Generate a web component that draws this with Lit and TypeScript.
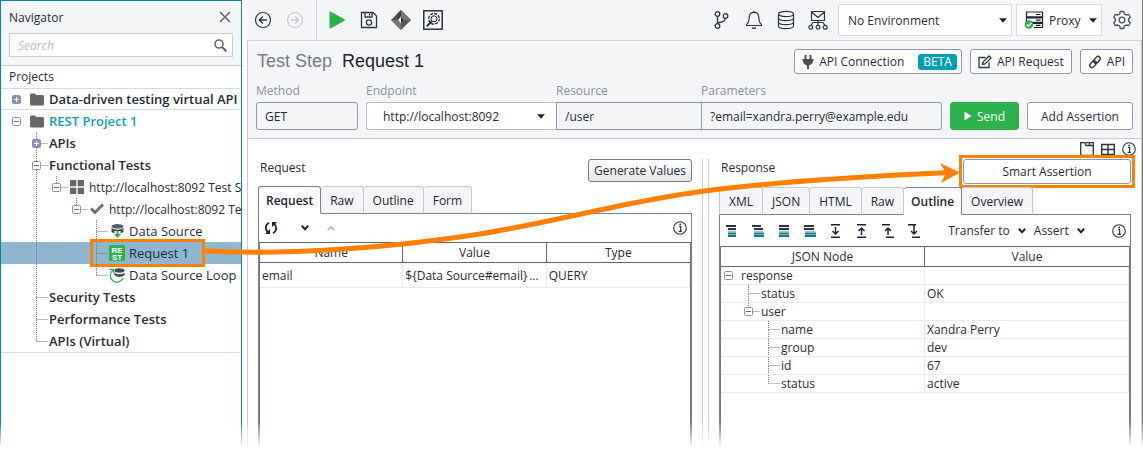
import { LitElement, html, css, svg, nothing } from "lit";
import { customElement, property } from "lit/decorators.js";

const dark = "#2b3442";

/* Icons: [width, height, drawing] */
const icons: Record<string, [number, number, unknown]> = {
  close: [12, 12, svg`<path d="M1 1l10 10M11 1L1 11" stroke="#666" stroke-width="1.6"/>`],
  search: [13, 13, svg`<circle cx="5" cy="5" r="4" fill="none" stroke="#666" stroke-width="1.6"/><path d="M8 8l4.400 4.400" stroke="#666" stroke-width="2"/>`],
  folder: [14, 13, svg`<path d="M0 2Q0 .5 1.500 .5H5L6.500 2H12.500Q14 2 14 3.500V11Q14 12.500 12.500 12.500H1.500Q0 12.500 0 11Z" fill="#666"/>`],
  suite: [14, 14, svg`<path d="M0 0h6.300v6.300H0zM7.700 0H14v6.300H7.700zM0 7.700h6.300V14H0zM7.700 7.700H14V14H7.700z" fill="#666"/>`],
  check: [14, 12, svg`<path d="M1 5.500L5 9.500L13 1.500" fill="none" stroke="#6a7280" stroke-width="3"/>`],
  source: [13, 14, svg`<ellipse cx="6.500" cy="2.300" rx="6" ry="2.300" fill="#555e6b"/><path d="M.5 4Q6.500 7.500 12.500 4V8Q11 9 9.500 9.200V7H3.500V9.200Q2 9 .5 8Z" fill="#434b57"/><path d="M5.500 7h2v3h2.500L6.500 14L3 10H5.500Z" fill="#2db14a"/>`],
  rest: [16, 16, svg`<rect width="16" height="16" rx="1" fill="#2db14a"/><text x="8" y="7.500" class="glyph">RE</text><text x="8" y="14.500" class="glyph">ST</text>`],
  loop: [16, 16, svg`<ellipse cx="10.500" cy="3.500" rx="5" ry="2.200" fill="#434b57"/><path d="M5.500 5.800Q10.500 8.800 15.500 5.800V8.300Q10.500 11.500 5.500 8.300Z" fill="#434b57"/><path d="M4 3.200A6.600 6.600 0 1 0 14 11" fill="none" stroke="#2db14a" stroke-width="1.400"/><path d="M.5 2.500H4.800V6.500" fill="none" stroke="#2db14a" stroke-width="1.400"/>`],
  back: [18, 18, svg`<circle cx="9" cy="9" r="7.500" fill="none" stroke="${dark}" stroke-width="1.200"/><path d="M13 9H5.500M8.800 5.500L5.300 9L8.800 12.500" fill="none" stroke="${dark}" stroke-width="1.300"/>`],
  forward: [18, 18, svg`<circle cx="9" cy="9" r="7.500" fill="none" stroke="#c3c9d6" stroke-width="1.200"/><path d="M5 9H12.500M9.200 5.500L12.700 9L9.200 12.500" fill="none" stroke="#c3c9d6" stroke-width="1.300"/>`],
  play: [18, 18, svg`<path d="M1.500 .8Q1.500 0 2.500 .4L16.500 8.300Q17.500 9 16.500 9.700L2.500 17.600Q1.500 18 1.500 17.200Z" fill="#2db14a"/>`],
  save: [18, 18, svg`<g fill="none" stroke="${dark}" stroke-width="1.300"><path d="M1.500 1.500H13L16.500 5V16.500H1.500Z"/><path d="M5 1.500V6H12V1.500M9.500 2.500V4.500"/><circle cx="9" cy="11.500" r="2.600"/></g>`],
  diamond: [20, 20, svg`<path d="M10 0L20 10L10 20L0 10Z" fill="#555"/><path d="M10 0L10 7L13 10H20Z" fill="#777"/><path d="M10 20V13L7 10H0Z" fill="#777"/><path d="M10 0V7L7 10L5 5Z" fill="#444"/><path d="M10 6.500L12.800 10L10 13.500L7.200 10Z" fill="#f4f5f7"/><path d="M10 6.500L12.800 10L10 13.500Z" fill="#222"/>`],
  inspect: [20, 20, svg`<g fill="none" stroke="#1d2430"><rect x=".8" y=".8" width="18.400" height="18.400" stroke-width="1.400"/><circle cx="11" cy="8.800" r="3" stroke-width="1"/><circle cx="11" cy="8.800" r="5.300" stroke-width="1.300" stroke-dasharray="2.800 1.300"/><path d="M8.500 11.500L3.800 16.300" stroke-width="1.800"/></g>`],
  branch: [18, 20, svg`<g fill="none" stroke="${dark}" stroke-width="1.300"><circle cx="4.500" cy="4" r="2.300"/><circle cx="12.500" cy="6" r="2.300"/><circle cx="4.500" cy="16" r="2.300"/><path d="M4.500 6.300V13.700M12.300 8.300Q12 11.500 8.500 12Q5 12.300 4.500 13.500"/></g>`],
  bell: [18, 20, svg`<g fill="none" stroke="${dark}" stroke-width="1.200"><path d="M9 2.200Q13.600 2.500 13.800 7.500Q14 12.500 16.500 14.500V15.500H1.500V14.500Q4 12.500 4.200 7.500Q4.400 2.500 9 2.200ZM9 1V2.500"/><path d="M7.200 17.500Q9 19.500 10.800 17.500"/></g>`],
  database: [18, 20, svg`<g fill="none" stroke="${dark}" stroke-width="1.200"><ellipse cx="9" cy="4" rx="7.500" ry="2.700"/><path d="M1.500 4V16C1.500 19.600 16.500 19.600 16.500 16V4M1.500 8C1.500 11.600 16.500 11.600 16.500 8M1.500 12C1.500 15.600 16.500 15.600 16.500 12"/></g>`],
  mail: [20, 20, svg`<g fill="none" stroke="${dark}" stroke-width="1.200"><path d="M3.500 1.500H16.500V10.500H3.500ZM3.500 2L10 7.500L16.500 2M10 10.500V15.500M10 12.500H5L3 15.500M10 12.500H15L17 15.500"/><circle cx="2.800" cy="17.300" r="1.900"/><circle cx="10" cy="17.300" r="1.900"/><circle cx="17.200" cy="17.300" r="1.900"/></g>`],
  server: [20, 18, svg`<g fill="none" stroke="#1d2430" stroke-width="1.200"><path d="M2.500 1H18.500V5.800H2.500ZM2.500 6.800H18.500V11.400H2.500ZM10 16.500H18.500V12.400H2.500M12 3.500H16.500M12 9.200H16.500M12 14.400H16.500"/></g><circle cx="5" cy="13.500" r="4.300" fill="#2db14a"/><path d="M2.800 13.500L4.500 15.200L7.400 12" fill="none" stroke="#fff" stroke-width="1.200"/>`],
  gear: [20, 20, svg`<g fill="none" stroke="#4a5260" stroke-width="1.300"><path d="M8.300 1.500H11.700L12.300 3.900L14.300 5L16.700 4.400L18.300 7.200L16.600 9V11L18.300 12.800L16.700 15.600L14.300 15L12.300 16.100L11.700 18.500H8.300L7.700 16.100L5.700 15L3.300 15.600L1.700 12.800L3.400 11V9L1.700 7.200L3.300 4.400L5.700 5L7.700 3.900Z" stroke-linejoin="round"/><circle cx="10" cy="10" r="2.800"/></g>`],
  plug: [12, 14, svg`<path d="M2.500 0H4.500V4H7.500V0H9.500V4H11.500V6H11Q10.800 9.500 7 10.300V14H5V10.300Q1.200 9.500 1 6H.5V4H2.500Z" fill="#4a4f58"/>`],
  edit: [14, 14, svg`<g fill="none" stroke="${dark}" stroke-width="1.300"><path d="M7.500 2.500H1V12.500H11V7.500"/><path d="M4.500 9.500L5 7L11 1L13 3L7 9Z"/></g>`],
  link: [14, 14, svg`<g fill="none" stroke="${dark}" stroke-width="1.400"><rect x="-3.800" y="-2.200" width="7.600" height="4.400" rx="2.200" transform="translate(9 4.800) rotate(-48)"/><rect x="-3.800" y="-2.200" width="7.600" height="4.400" rx="2.200" transform="translate(5 9.200) rotate(-48)"/></g>`],
  send: [8, 10, svg`<path d="M.5 .5L7.500 5L.5 9.500Z" fill="#fff"/>`],
  drop: [8, 5, svg`<path d="M0 .3H8L4 4.700Z" fill="#1d2430"/>`],
  window: [14, 14, svg`<path d="M.7 14V.7H5L6 3.500H13.300V14M6 .7H13.300V3.500M9.500 .7V3.500M.7 13.300H13.300" fill="none" stroke="${dark}" stroke-width="1.300"/>`],
  grid: [14, 13, svg`<path d="M.7 1.500H13.300V11.500H.7ZM7 1.500V11.500M.7 6.500H13.300" fill="none" stroke="${dark}" stroke-width="1.400"/>`],
  info: [14, 14, svg`<circle cx="7" cy="7" r="6.300" fill="none" stroke="${dark}" stroke-width="1.100"/><path d="M6 5.500H7.600V10M5.600 10.300H9" fill="none" stroke="${dark}" stroke-width="1.200"/><circle cx="7.200" cy="3.500" r=".9" fill="${dark}"/>`],
  refresh: [14, 14, svg`<g fill="none" stroke="#1d2430" stroke-width="1.800"><path d="M5 1.800Q1.200 4 2 8Q2.300 9.800 4.500 11.800M9 12.200Q12.800 10 12 6Q11.700 4.200 9.500 2.200"/></g><path d="M1 13H6V8ZM13 1H8V6Z" fill="#1d2430"/>`],
  down: [8, 6, svg`<path d="M.8 .8L4 4.200L7.200 .8" fill="none" stroke="#1d2430" stroke-width="2"/>`],
  up: [8, 6, svg`<path d="M.8 5.200L4 1.800L7.200 5.200" fill="none" stroke="#b3bac9" stroke-width="1.800"/>`],
  bars1: [12, 12, svg`<path d="M0 1H10M2 4H10" stroke="${dark}" stroke-width="2"/><path d="M2 6.300H10" stroke="#a0a8b5"/><path d="M2 8.500H10M2 11H10" stroke="#00798a" stroke-width="2"/>`],
  bars2: [12, 12, svg`<path d="M0 1H9M2 4H11" stroke="${dark}" stroke-width="2"/><path d="M2 6.300H11" stroke="#a0a8b5"/><path d="M2 8.500H12M2 11H12" stroke="#00798a" stroke-width="2"/>`],
  bars3: [12, 12, svg`<path d="M1 1H11M1 4H11" stroke="${dark}" stroke-width="2"/><path d="M1 6.300H11" stroke="#a0a8b5"/><path d="M1 8.500H11M1 11H11" stroke="#00798a" stroke-width="2"/>`],
  bars4: [12, 12, svg`<path d="M0 1H10M0 4H10" stroke="${dark}" stroke-width="2"/><path d="M1 6.300H11" stroke="#a0a8b5"/><path d="M1 8.500H12M1 11H12" stroke="#00798a" stroke-width="2"/>`],
  toBottom: [12, 14, svg`<path d="M1 .8H10M1 13.200H10M5.500 3V10M2.500 7L5.500 10L8.500 7" fill="none" stroke="#1d2430" stroke-width="1.500"/>`],
  toTop: [12, 14, svg`<path d="M1 .8H10M1 13.200H10M5.500 11V4M2.500 7L5.500 4L8.500 7" fill="none" stroke="#1d2430" stroke-width="1.500"/>`],
  upShift: [12, 14, svg`<path d="M0 .8H8M4 13.200H12M6 11V4M3 7L6 4L9 7" fill="none" stroke="#1d2430" stroke-width="1.500"/>`],
  downShift: [12, 14, svg`<path d="M0 .8H8M4 13.200H12M6 1V10M3 7L6 10L9 7" fill="none" stroke="#1d2430" stroke-width="1.500"/>`],
};

const icon = (name: string) => {
  const [w, h, body] = icons[name];
  return html`<svg class="icon" width=${w} height=${h} viewBox="0 0 ${w} ${h}" aria-hidden="true">${body}</svg>`;
};

interface Guide {
  depth: number;
  box?: "plus" | "minus";
  up?: boolean;
  down?: boolean;
  through?: number[];
}

/* Dotted branch lines and the expander box in front of a tree row. */
const guides = (g: Guide, lead: number, h: number) => {
  const cx = lead + g.depth * 20 + 0.5;
  const cy = Math.floor(h / 2) + 0.5;
  const w = lead + g.depth * 20 + 13;
  const line = (x1: number, y1: number, x2: number, y2: number) =>
    svg`<line x1=${x1} y1=${y1} x2=${x2} y2=${y2} stroke="#777" stroke-dasharray="1 1"/>`;
  return html`<svg class="icon" width=${w} height=${h} viewBox="0 0 ${w} ${h}" aria-hidden="true">
    ${(g.through ?? []).map((d) => line(lead + d * 20 + 0.5, 0, lead + d * 20 + 0.5, h))}
    ${g.up ? line(cx, 0, cx, cy) : nothing}
    ${g.down ? line(cx, cy + 0.5, cx, h) : nothing}
    ${g.depth ? line(cx, cy, w - 1, cy) : nothing}
    ${g.box
      ? svg`<rect x=${cx - 4} y=${cy - 4} width="8" height="8" rx="1" stroke="#8793ad" fill=${g.box === "plus" ? "#8793ad" : "#fff"}/>
        <path d="M${cx - 2.5} ${cy}h5${g.box === "plus" ? `M${cx} ${cy - 2.5}v5` : ""}" stroke=${g.box === "plus" ? "#fff" : "#5f6b85"}/>`
      : nothing}
  </svg>`;
};

const base = css`
  *, *::after { box-sizing: border-box; }
  .icon { display: block; flex: none; }
  button, input, select { font: inherit; color: inherit; margin: 0; }
  button { cursor: pointer; }
  h1, h2 { margin: 0; font-weight: 400; }
  .tool {
    display: grid; place-items: center; width: 32px; height: 32px;
    padding: 0; border: 0; background: none;
  }
`;

interface Node extends Guide {
  text: string;
  icon?: string;
  look?: string;
}

const tree: Node[] = [
  { text: "Data-driven testing virtual API", depth: 0, box: "plus", icon: "folder", look: "strong ruled" },
  { text: "REST Project 1", depth: 0, box: "minus", icon: "folder", look: "strong project" },
  { text: "APIs", depth: 1, box: "plus", up: true, down: true, look: "strong" },
  { text: "Functional Tests", depth: 1, box: "minus", up: true, down: true, look: "strong" },
  { text: "http://localhost:8092 Test Suite", depth: 2, box: "minus", up: true, through: [1], icon: "suite", look: "url" },
  { text: "http://localhost:8092 TestCase", depth: 3, box: "minus", up: true, through: [1], icon: "check", look: "url" },
  { text: "Data Source", depth: 4, up: true, down: true, through: [1], icon: "source" },
  { text: "Request 1", depth: 4, up: true, down: true, through: [1], icon: "rest", look: "selected" },
  { text: "Data Source Loop", depth: 4, up: true, through: [1], icon: "loop" },
  { text: "Security Tests", depth: 1, up: true, down: true, look: "strong" },
  { text: "Performance Tests", depth: 1, up: true, down: true, look: "strong" },
  { text: "APIs (Virtual)", depth: 1, up: true, look: "strong" },
];

@customElement("project-navigator")
class ProjectNavigator extends LitElement {
  static styles = [base, css`
    :host { display: block; overflow: hidden; border: 1px solid #00889a; border-bottom: 0; font-size: 13px; }
    .head { background: #f4f5f7; padding: 4px 8px 8px; border-bottom: 1px solid #c9c9c9; display: grid; gap: 4px; }
    .title { display: flex; align-items: center; justify-content: space-between; height: 24px; }
    .title h2 { font-size: 12px; }
    .title .tool { width: 16px; height: 24px; }
    .box { display: flex; align-items: center; height: 24px; border: 1px solid #ccc; background: #fff; padding: 0 5px 0 8px; font-size: 12px; }
    .box input { flex: 1; min-width: 0; border: 0; padding: 0; background: none; outline: 0; }
    .box input::placeholder { color: #b9bfca; font-style: italic; opacity: 1; }
    .label { font-size: 12px; line-height: 22px; padding: 0 8px; border-bottom: 1px solid #d5d9e2; }
    .nodes { list-style: none; margin: 0; padding: 0; border-bottom: 1px solid #d5d9e2; }
    .node { display: flex; align-items: center; height: 22px; white-space: nowrap; position: relative; }
    .slot { display: grid; place-items: center; width: 16px; margin-right: 4px; flex: none; }
    .strong { font-weight: 600; }
    .url { font-size: 12px; }
    .node.ruled { height: 21px; border-bottom: 1px solid #d5d9e2; }
    .project { color: #0f9fb3; }
    .selected { background: #8eb6ce; }
    .selected::after {
      content: ""; position: absolute; left: 89px; top: -3px; width: 115px; height: 28px;
      border: 3px solid #ff8000;
    }
    .glyph { font: 700 8px "Liberation Sans", sans-serif; fill: #fff; text-anchor: middle; }
  `];

  render() {
    return html`
      <div class="head">
        <div class="title"><h2>Navigator</h2><button class="tool" aria-label="Close">${icon("close")}</button></div>
        <label class="box"><input type="search" placeholder="Search" aria-label="Search" />${icon("search")}</label>
      </div>
      <div class="label">Projects</div>
      <ul class="nodes">
        ${tree.map((n) => html`<li class="node ${n.look ?? ""}">
          ${guides(n, 15, 22)}${n.icon ? html`<span class="slot">${icon(n.icon)}</span>` : nothing}<span>${n.text}</span>
        </li>`)}
      </ul>`;
  }
}

@customElement("tab-strip")
class TabStrip extends LitElement {
  @property({ attribute: false }) tabs: string[] = [];
  @property() active = "";

  static styles = [base, css`
    :host { display: block; }
    .tabs { display: flex; height: 28px; }
    .tab {
      background: #f4f5f7; border: 1px solid #c4c7cc; border-width: 1px 1px 0 0; padding: 0 9px;
      border-bottom: 1px solid #71829b; border-radius: 3px 3px 0 0; color: #1d2430; white-space: nowrap;
    }
    .tab:first-child { border-left-width: 1px; }
    .tab.on { background: #fff; border-color: #71829b; border-bottom-color: #fff; font-weight: 600; padding: 0 7px; }
    .rest { flex: 1; border-bottom: 1px solid #71829b; }
  `];

  render() {
    return html`<div class="tabs" role="tablist">
      ${this.tabs.map((t) => html`<button role="tab" class="tab ${t === this.active ? "on" : ""}" aria-selected=${t === this.active ? "true" : "false"}>${t}</button>`)}
      <span class="rest"></span>
    </div>`;
  }
}

interface Entry extends Guide {
  key: string;
  value?: string;
}

const entries: Entry[] = [
  { key: "response", depth: 0, box: "minus" },
  { key: "status", value: "OK", depth: 1, up: true, down: true },
  { key: "user", depth: 1, box: "minus", up: true },
  { key: "name", value: "Xandra Perry", depth: 2, up: true, down: true },
  { key: "group", value: "dev", depth: 2, up: true, down: true },
  { key: "id", value: "67", depth: 2, up: true, down: true },
  { key: "status", value: "active", depth: 2, up: true },
];

@customElement("app-root")
class AppRoot extends LitElement {
  static styles = [base, css`
    :host {
      display: block; position: relative; overflow: hidden; background: #fff;
      font-family: "Open Sans", "Noto Sans", sans-serif; font-size: 12px; color: #232b38;
    }
    .shell { display: grid; grid-template-columns: 242px minmax(0, 1fr); column-gap: 5px; min-height: 100vh; }
    .work { display: flex; flex-direction: column; border-right: 1px solid #777; min-width: 0; }

    .toolbar { display: flex; align-items: center; height: 41px; background: #f4f5f7; border-bottom: 1px solid #d0d4dc; padding-right: 4px; }
    .rule { width: 1px; align-self: stretch; background: #d0d4dc; margin: 0 4px 0 5px; }
    .space { flex: 1; }
    .drop { display: flex; align-items: center; height: 32px; background: #fff; border: 1px solid #d5d9e2; margin-left: 4px; }
    .drop.env { width: 174px; }
    .drop.proxy { width: 86px; padding-left: 7px; margin-right: 4px; }
    .pick { display: grid; flex: 1; align-items: center; height: 100%; min-width: 0; }
    .pick > * { grid-area: 1 / 1; }
    .pick .icon { justify-self: end; margin-right: 4px; pointer-events: none; }
    .pick select { appearance: none; width: 100%; height: 100%; border: 0; background: none; padding: 0 16px 0 9px; outline: 0; }
    .drop.proxy select { padding-left: 5px; }

    .step { background: #f4f5f7; border: 1px solid #c9cbd0; border-width: 0 1px 1px; padding: 8px 8px; }
    .top { display: flex; align-items: center; gap: 8px; height: 25px; }
    .name { font: 18px "Liberation Sans", Arial, sans-serif; flex: 1; color: #1d2430; display: flex; gap: 10px; white-space: nowrap; }
    .kind { color: #727b89; padding-left: 1px; }
    .btn {
      display: flex; align-items: center; justify-content: center; gap: 5px; height: 25px; padding: 0 7px;
      background: #fff; border: 1px solid #8c97ad; border-radius: 3px; white-space: nowrap;
    }
    .beta { background: #00a0b4; color: #fff; border-radius: 3px; line-height: 16px; padding: 0 5px; margin: 0 -3px 0 9px; }
    .fields { display: flex; align-items: flex-end; gap: 8px; margin-top: 8px; }
    .joined { display: flex; flex: 1; min-width: 0; }
    .field { display: grid; gap: 3px; min-width: 0; color: #8790a3; }
    .field span { line-height: 17px; }
    .field input, .frame { height: 28px; width: 100%; border: 1px solid #8c97ad; background: #f4f5f7; color: #232b38; }
    .field input { padding: 0 8px; outline: 0; }
    .frame { display: flex; background: #fff; border-right: 0; border-color: #b7bdca; border-radius: 3px 0 0 3px; }
    .frame select { padding-left: 16px; }
    .frame .icon { margin-right: 11px; }
    .method { width: 102px; }
    .method input { border-radius: 3px; }
    .endpoint { flex: 190; }
    .resource { flex: 145; }
    .params { flex: 241; }
    .resource input { border-right: 0; }
    .params input { border-radius: 0 3px 3px 0; }
    .tall { height: 28px; }
    .send { background: #2db14a; border-color: #2db14a; color: #fff; width: 69px; }
    .add { width: 106px; }

    .body { flex: 1; display: flex; flex-direction: column; border: 1px solid #c9cbd0; border-width: 0 1px; }
    .tools { display: flex; justify-content: flex-end; align-items: center; height: 20px; padding-right: 5px; gap: 7px; }
    .tools .tool { width: 14px; height: 14px; }
    .panes { flex: 1; display: grid; grid-template-columns: minmax(0, 434fr) 27px minmax(0, 412fr); padding: 0 10px; }
    .split { border: 1px solid #ccc; border-width: 0 1px; justify-self: start; width: 7px; margin-left: 10px; }
    .pane { display: flex; flex-direction: column; min-width: 0; }
    .bar { display: flex; justify-content: space-between; align-items: flex-start; height: 27px; }
    .reply .bar { height: 28px; }
    .bar h2 { font-size: 12px; line-height: 17px; padding-left: 2px; }
    .gen { height: 23px; padding: 0 5px; border-color: #777; background: linear-gradient(#fff, #e6e6e6); }
    .mark { outline: 3px solid #ff8000; outline-offset: 1px; width: 168px; }
    .mark .btn { width: 100%; }
    .panel { flex: 1; display: flex; flex-direction: column; border: 1px solid #71829b; border-width: 0 1px; }
    .hold { flex: 1; border: 1px solid #777; border-width: 0 1px; }
    .strip { display: flex; align-items: center; height: 28px; padding: 0 2px 0 3px; gap: 8px; }
    .strip .tool { width: 18px; height: 20px; }
    .menu { display: flex; align-items: center; gap: 8px; border: 0; background: none; padding: 0; height: 20px; white-space: nowrap; }
    .grid { width: 100%; border-collapse: separate; border-spacing: 0; table-layout: fixed; }
    .grid th {
      height: 21px; padding: 0; font-weight: 400; border: 1px solid #666; border-width: 1px 1px 1px 0;
    }
    .grid th:last-child { border-right: 0; }
    .grid td { height: 25px; padding: 0 0 0 2px; border: 1px solid #eaeaea; border-width: 0 1px 1px 0; white-space: nowrap; }
    .value { display: flex; justify-content: space-between; padding-right: 7px; }
    .json td { height: 18px; line-height: 17px; }
    .json .key { padding: 0; }
    .key div { display: flex; }
    .reply .strip { height: 31px; }

    .curve, .tip { position: absolute; pointer-events: none; }
    .curve { left: 204px; top: 160px; width: calc(100% - 402px); height: 100px; overflow: visible; }
    .tip { right: 183px; top: 163px; }
    .fade { position: absolute; left: 0; right: 0; bottom: 0; height: 30px; background: linear-gradient(transparent, #fff 88%); pointer-events: none; }
  `];

  private tool(name: string, label: string) {
    return html`<button class="tool" aria-label=${label} title=${label}>${icon(name)}</button>`;
  }

  render() {
    return html`
      <div class="shell">
        <project-navigator></project-navigator>
        <main class="work">
          <div class="toolbar">
            ${this.tool("back", "Back")}${this.tool("forward", "Forward")}
            <span class="rule"></span>
            ${this.tool("play", "Run")}${this.tool("save", "Save")}${this.tool("diamond", "Export")}${this.tool("inspect", "Inspect")}
            <span class="space"></span>
            ${this.tool("branch", "Branches")}${this.tool("bell", "Alerts")}${this.tool("database", "Databases")}${this.tool("mail", "Messages")}
            <div class="drop env">
              <span class="pick"><select aria-label="Environment"><option>No Environment</option></select>${icon("drop")}</span>
            </div>
            <div class="drop proxy">
              ${icon("server")}
              <span class="pick"><select aria-label="Proxy"><option>Proxy</option></select>${icon("drop")}</span>
            </div>
            ${this.tool("gear", "Settings")}
          </div>

          <section class="step">
            <div class="top">
              <h1 class="name"><span class="kind">Test Step</span><span>Request 1</span></h1>
              <button class="btn">${icon("plug")}API Connection<span class="beta">BETA</span></button>
              <button class="btn">${icon("edit")}API Request</button>
              <button class="btn">${icon("link")}API</button>
            </div>
            <div class="fields">
              <label class="field method"><span>Method</span><input readonly value="GET" /></label>
              <div class="joined">
                <label class="field endpoint"><span>Endpoint</span>
                  <div class="frame"><div class="pick"><select><option>http://localhost:8092</option></select>${icon("drop")}</div></div>
                </label>
                <label class="field resource"><span>Resource</span><input value="/user" /></label>
                <label class="field params"><span>Parameters</span><input value="?email=xandra.perry@example.edu" /></label>
              </div>
              <button class="btn tall send">${icon("send")}Send</button>
              <button class="btn tall add">Add Assertion</button>
            </div>
          </section>

          <section class="body">
            <div class="tools">${this.tool("window", "Tabs")}${this.tool("grid", "Layout")}${this.tool("info", "Help")}</div>
            <div class="panes">
              <section class="pane">
                <div class="bar"><h2>Request</h2><button class="btn gen">Generate Values</button></div>
                <tab-strip .tabs=${["Request", "Raw", "Outline", "Form"]} active="Request"></tab-strip>
                <div class="panel">
                  <div class="strip">
                    ${this.tool("refresh", "Refresh")}<span></span>${this.tool("down", "Move down")}${this.tool("up", "Move up")}
                    <span class="space"></span>${this.tool("info", "Help")}
                  </div>
                  <div class="hold">
                    <table class="grid">
                      <thead><tr><th>Name</th><th>Value</th><th>Type</th></tr></thead>
                      <tbody><tr>
                        <td>email</td>
                        <td><div class="value"><span>\${Data Source#email}</span><span>...</span></div></td>
                        <td>QUERY</td>
                      </tr></tbody>
                    </table>
                  </div>
                </div>
              </section>
              <div class="split"></div>
              <section class="pane reply">
                <div class="bar"><h2>Response</h2><div class="mark"><button class="btn">Smart Assertion</button></div></div>
                <tab-strip .tabs=${["XML", "JSON", "HTML", "Raw", "Outline", "Overview"]} active="Outline"></tab-strip>
                <div class="panel">
                  <div class="strip">
                    ${["bars1", "bars2", "bars3", "bars4", "toBottom", "toTop", "upShift", "downShift"].map((n, i) => this.tool(n, `View ${i + 1}`))}
                    <span class="space"></span>
                    <button class="menu">Transfer to ${icon("down")}</button>
                    <button class="menu">Assert ${icon("down")}</button>
                    <span class="space"></span>${this.tool("info", "Help")}
                  </div>
                  <div class="hold">
                    <table class="grid json">
                      <thead><tr><th>JSON Node</th><th>Value</th></tr></thead>
                      <tbody>
                        ${entries.map((e) => html`<tr>
                          <td class="key"><div>${guides(e, 7, 17)}${e.key}</div></td>
                          <td>${e.value ?? nothing}</td>
                        </tr>`)}
                      </tbody>
                    </table>
                  </div>
                </div>
              </section>
            </div>
          </section>
        </main>
      </div>
      <svg class="curve" viewBox="0 0 741 100" preserveAspectRatio="none" aria-hidden="true">
        <path d="M0 91C86 95 186 88 276 74C356 61 426 40 516 29C586 21 666 16 746 12.500" fill="none" stroke="#ff8000" stroke-width="5" vector-effect="non-scaling-stroke"/>
      </svg>
      <svg class="tip" width="20" height="20" viewBox="0 0 20 20" aria-hidden="true"><path d="M0 0L20 9.500L1 20L6 10Z" fill="#ff8000"/></svg>
      <div class="fade"></div>`;
  }
}
